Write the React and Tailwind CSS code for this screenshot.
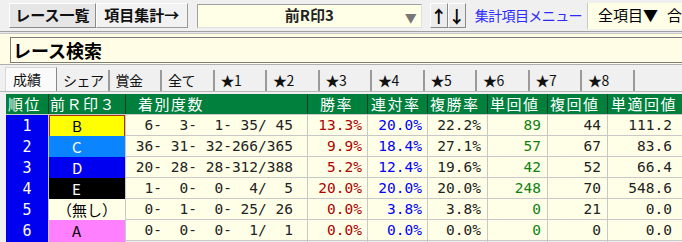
import React from "react";

const jp = { fontFamily: "'Noto Sans CJK JP', sans-serif" };
const mono = { fontFamily: "'DejaVu Sans Mono', 'Noto Sans CJK JP', monospace" };

const tabs = ["成績", "シェア", "賞金", "全て", "★1", "★2", "★3", "★4", "★5", "★6", "★7", "★8"];

const rows = [
  { no: "1", mark: "B", markCls: "bg-[#ffff00] text-black shadow-[inset_0_0_0_1px_#a83200]", rec: "6-  3-  1- 35/ 45", win: "13.3%", ren: "20.0%", fuku: "22.2%", tan: "89", fk: "44", tt: "111.2" },
  { no: "2", mark: "C", markCls: "bg-[#0a84ff] text-white", rec: "36- 31- 32-266/365", win: "9.9%", ren: "18.4%", fuku: "27.1%", tan: "57", fk: "67", tt: "83.6" },
  { no: "3", mark: "D", markCls: "bg-[#0000f0] text-white", rec: "20- 28- 28-312/388", win: "5.2%", ren: "12.4%", fuku: "19.6%", tan: "42", fk: "52", tt: "66.4" },
  { no: "4", mark: "E", markCls: "bg-black text-white", rec: "1-  0-  0-  4/  5", win: "20.0%", ren: "20.0%", fuku: "20.0%", tan: "248", fk: "70", tt: "548.6" },
  { no: "5", mark: "（無し）", markCls: "bg-[#ffffe8] text-black", rec: "0-  1-  0- 25/ 26", win: "0.0%", ren: "3.8%", fuku: "3.8%", tan: "0", fk: "21", tt: "0.0" },
  { no: "6", mark: "A", markCls: "bg-[#ff80ff] text-black", rec: "0-  0-  0-  1/  1", win: "0.0%", ren: "0.0%", fuku: "0.0%", tan: "0", fk: "0", tt: "0.0" },
];

const headers = [
  { t: "順位", cls: "pl-[2px]" },
  { t: "前Ｒ印３", cls: "pl-[1px]" },
  { t: "着別度数", cls: "pl-[12px]" },
  { t: "勝率", cls: "pl-[12px]" },
  { t: "連対率", cls: "pl-[3px]" },
  { t: "複勝率", cls: "pl-[2px]" },
  { t: "単回値", cls: "pl-[2px]" },
  { t: "複回値", cls: "pl-[2px]" },
  { t: "単適回値", cls: "pl-[3px]" },
];

const cols = "grid grid-cols-[43px_77px_182px_60px_60px_60px_60px_60px_80px]";

const App = () => {
  return (
    <div className="w-[682px] h-[242px] overflow-hidden bg-[#f0f0f0]" style={jp}>
      {/* top toolbar */}
      <div className="h-[31px] flex items-center pl-[9px] whitespace-nowrap">
        <div className="h-[25px] w-[89px] flex items-center justify-center bg-[#e6e6e6] border border-t-white border-l-white border-r-[#8a8a8a] border-b-[#8a8a8a] text-[15px] font-bold text-[#111]">
          レース一覧
        </div>
        <div className="h-[25px] w-[95px] flex items-center justify-center bg-[#f2f2f2] border border-t-white border-l-white border-r-[#9a9a9a] border-b-[#9a9a9a] text-[15px] font-bold text-[#111]">
          項目集計→
        </div>
        <div className="ml-[9px] h-[24px] w-[231px] relative flex items-center justify-center bg-[#ffffe8] border border-t-[#a0a0a0] border-l-[#a0a0a0] border-r-[#e0e0e0] border-b-[#e0e0e0] text-[15px] font-bold text-[#222]">
          前R印3
          <span className="absolute right-[4px] top-[4px] text-[12px] text-[#777]">▼</span>
        </div>
        <div className="ml-[8px] h-[25px] w-[18px] flex items-center justify-center bg-[#ececec] border border-t-white border-l-white border-r-[#8a8a8a] border-b-[#8a8a8a] text-[17px] font-bold text-black">
          ↑
        </div>
        <div className="h-[25px] w-[18px] flex items-center justify-center bg-[#ececec] border border-t-white border-l-white border-r-[#8a8a8a] border-b-[#8a8a8a] text-[17px] font-bold text-black">
          ↓
        </div>
        <div className="ml-[9px] text-[14px] text-[#2b2bff] tracking-[-0.6px]">集計項目メニュー</div>
        <div className="ml-[5px] h-[26px] flex-1 flex items-center pl-[10px] bg-[#ffffe8] border-l border-[#c8c8c8] text-[15px] text-black">
          全項目▼<span className="ml-[9px]">合</span>
        </div>
      </div>

      {/* separator */}
      <div className="h-[3px] border-t border-b border-t-[#a0a0a0] border-b-[#c8c8c8] bg-[#e8e8e8]" />

      {/* search panel */}
      <div className="h-[31px] bg-[#fffde6] pt-[3px] pl-[10px] border-b border-[#b0b0b0]">
        <div className="h-[26px] border border-[#7a7a7a] border-r-0 flex items-center pl-[2px] text-[18px] font-bold text-black">
          レース検索
        </div>
      </div>

      {/* tabs */}
      <div className="h-[27px] flex items-end pl-[5px] border-b border-[#b8b8b8] whitespace-nowrap">
        {tabs.map((tab, i) => (
          <div
            key={i}
            className={
              i === 0
                ? "w-[52px] h-[24px] flex items-center pl-[7px] text-[14px] text-[#111] bg-[#fafafa] border-t border-l border-r border-t-[#d8d8d8] border-l-[#d8d8d8] border-r-[#888]"
                : "w-[52.5px] h-[21px] flex items-center pl-[6px] text-[14px] tracking-[-0.5px] text-[#111] border-r-2 border-[#9a9a9a] overflow-hidden"
            }
          >
            {tab}
          </div>
        ))}
      </div>

      {/* table */}
      <div className="pl-[6px] pt-[2px]">
        <div className={`${cols} h-[21px] bg-[#00803c] text-white text-[15px] tracking-[1.5px] border-b border-[#c8c8c8]`}>
          {headers.map((h, i) => (
            <div key={i} className={`flex items-center whitespace-nowrap overflow-hidden border-r border-[#1a3a22] ${h.cls}`}>
              {h.t}
            </div>
          ))}
        </div>
        {rows.map((r, i) => (
          <div key={i} className={`${cols} h-[21px] bg-[#ffffe8] border-b border-[#c8c8c8] text-[14.5px]`} style={mono}>
            <div className="flex items-center justify-center bg-[#0000f0] text-white text-[15px] border-r border-[#c8c8c8]">
              {r.no}
            </div>
            <div
              className={`flex items-center border-r border-[#c8c8c8] text-[15px] ${r.markCls} ${r.mark.length > 1 ? "justify-center" : "pl-[23px]"}`}
              style={jp}
            >
              {r.mark}
            </div>
            <div className="flex items-center justify-end pr-[14px] whitespace-pre text-[#222] border-r border-[#c8c8c8]">{r.rec}</div>
            <div className="flex items-center justify-end pr-[5px] text-[#b00000] border-r border-[#c8c8c8]">{r.win}</div>
            <div className="flex items-center justify-end pr-[5px] text-[#0000ff] border-r border-[#c8c8c8]">{r.ren}</div>
            <div className="flex items-center justify-end pr-[6px] text-[#222] border-r border-[#c8c8c8]">{r.fuku}</div>
            <div className="flex items-center justify-end pr-[6px] text-[#108010] border-r border-[#c8c8c8]">{r.tan}</div>
            <div className="flex items-center justify-end pr-[6px] text-[#222] border-r border-[#c8c8c8]">{r.fk}</div>
            <div className="flex items-center justify-end pr-[16px] text-[#222]">{r.tt}</div>
          </div>
        ))}
      </div>
    </div>
  );
};

export default App;
